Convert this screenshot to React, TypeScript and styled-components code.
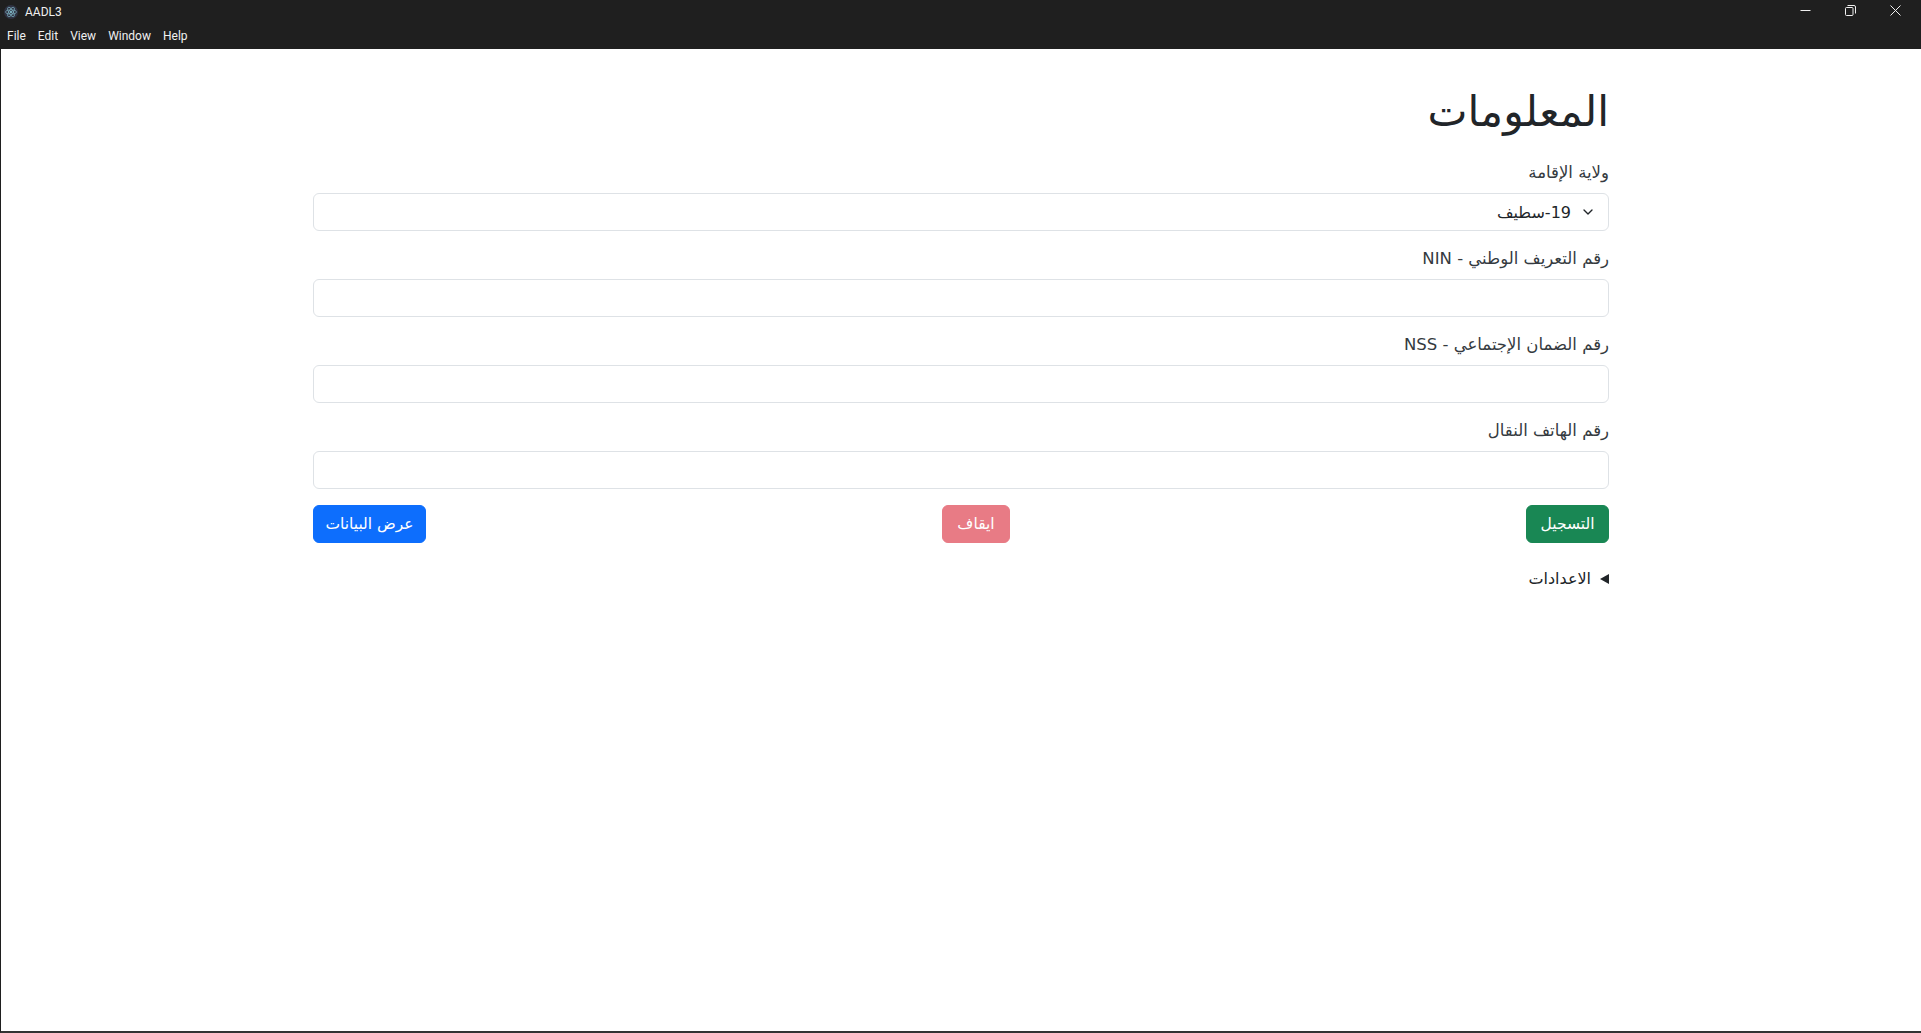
import React from 'react'
import styled, { createGlobalStyle } from 'styled-components'
import { LuChevronDown } from 'react-icons/lu'

const GlobalStyle = createGlobalStyle`
  html, body {
    margin: 0;
    padding: 0;
    background: #fff;
  }
  * {
    box-sizing: border-box;
  }
`

const menu_items = ['File', 'Edit', 'View', 'Window', 'Help']

const fields = [
  { id: 'nin', label: 'رقم التعريف الوطني - NIN' },
  { id: 'nss', label: 'رقم الضمان الإجتماعي - NSS' },
  { id: 'phone', label: 'رقم الهاتف النقال' }
]

const ElectronIcon = () => (
  <svg width="14" height="14" viewBox="0 0 14 14" fill="none">
    <circle cx="7" cy="7" r="7" fill="#2f3242" />
    <g stroke="#9feaf9" strokeWidth="0.6" opacity="0.8">
      <ellipse cx="7" cy="7" rx="5.4" ry="2.1" />
      <ellipse cx="7" cy="7" rx="5.4" ry="2.1" transform="rotate(60 7 7)" />
      <ellipse cx="7" cy="7" rx="5.4" ry="2.1" transform="rotate(120 7 7)" />
    </g>
    <circle cx="7" cy="7" r="0.9" fill="#9feaf9" />
  </svg>
)

const App: React.FC = () => {
  return (
    <>
      <GlobalStyle />
      <Frame>
        <TitleBar>
          <TitleRow>
            <ElectronIcon />
            <AppName>AADL3</AppName>
            <WindowControls>
              <WindowButton aria-label="minimize">
                <svg width="11" height="11" viewBox="0 0 11 11">
                  <path d="M0.5 5.5H10.5" stroke="#f0f0f0" />
                </svg>
              </WindowButton>
              <WindowButton aria-label="restore">
                <svg width="11" height="11" viewBox="0 0 11 11" fill="none">
                  <rect x="0.5" y="2.5" width="7.5" height="8" rx="1" stroke="#f0f0f0" />
                  <path d="M2.5 0.5H9a1.5 1.5 0 0 1 1.5 1.5V8.5" stroke="#f0f0f0" />
                </svg>
              </WindowButton>
              <WindowButton aria-label="close">
                <svg width="11" height="11" viewBox="0 0 11 11">
                  <path d="M0.5 0.5L10.5 10.5M10.5 0.5L0.5 10.5" stroke="#f0f0f0" />
                </svg>
              </WindowButton>
            </WindowControls>
          </TitleRow>
          <MenuBar>
            {menu_items.map((item) => (
              <MenuItem key={item}>{item}</MenuItem>
            ))}
          </MenuBar>
        </TitleBar>

        <Page dir="rtl">
          <Heading>المعلومات</Heading>

          <FormGroup>
            <Label>ولاية الإقامة</Label>
            <SelectBox>
              <LuChevronDown size={16} />
              <span>19-سطيف</span>
            </SelectBox>
          </FormGroup>

          {fields.map((field) => (
            <FormGroup key={field.id}>
              <Label htmlFor={field.id}>{field.label}</Label>
              <Input id={field.id} />
            </FormGroup>
          ))}

          <ButtonRow>
            <Button $color="#198754" $width={83}>التسجيل</Button>
            <Button $color="#dc3545" $width={68} $disabled>ايقاف</Button>
            <Button $color="#0d6efd" $width={113}>عرض البيانات</Button>
          </ButtonRow>

          <Settings>
            <Caret />
            <span>الاعدادات</span>
          </Settings>
        </Page>
      </Frame>
    </>
  )
}

export default App

const Frame = styled.div`
  width: 1921px;
  height: 1033px;
  display: flex;
  flex-direction: column;
  overflow: hidden;
  border-left: 1px solid #1f1f1f;
  border-bottom: 2px solid #333;
`
const TitleBar = styled.header`
  height: 49px;
  flex: none;
  margin-left: -1px;
  background: #1f1f1f;
  color: #f0f0f0;
  font-family: "Roboto", "Open Sans", sans-serif;
`
const TitleRow = styled.div`
  height: 24px;
  display: flex;
  align-items: center;
  gap: 7px;
  padding-left: 4px;
`
const AppName = styled.span`
  font-size: 12px;
`
const WindowControls = styled.div`
  margin-left: auto;
  display: flex;
  align-items: center;
  gap: 34px;
  padding-right: 20px;
  margin-top: -4px;
`
const WindowButton = styled.span`
  display: flex;
  width: 11px;
  height: 11px;
`
const MenuBar = styled.nav`
  display: flex;
  gap: 12px;
  padding-left: 7px;
  height: 24px;
  align-items: center;
`
const MenuItem = styled.span`
  font-size: 12px;
`
const Page = styled.main`
  width: 1296px;
  margin-left: 312px;
  padding-top: 39px;
  color: #212529;
  font-family: "DejaVu Sans", sans-serif;
`
const Heading = styled.h1`
  margin: 0 0 25px;
  height: 48px;
  font-size: 42.5px;
  line-height: 48px;
  font-weight: 400;
`
const FormGroup = styled.div`
  margin-bottom: 16px;
`
const Label = styled.label`
  display: block;
  height: 24px;
  margin-bottom: 8px;
  font-size: 16.5px;
  line-height: 24px;
  color: #343a40;
`
const SelectBox = styled.div`
  height: 38px;
  display: flex;
  align-items: center;
  gap: 9px;
  padding: 0 12px;
  background: #fff;
  border: 1px solid #dee2e6;
  border-radius: 6px;
  font-size: 16px;
`
const Input = styled.input`
  display: block;
  width: 100%;
  height: 38px;
  padding: 6px 12px;
  background: #fff;
  border: 1px solid #dee2e6;
  border-radius: 6px;
`
const ButtonRow = styled.div`
  display: flex;
  justify-content: space-between;
`
const Button = styled.button<{ $color: string; $width: number; $disabled?: boolean }>`
  width: ${(p) => p.$width}px;
  height: 38px;
  padding: 0;
  border: 1px solid ${(p) => p.$color};
  border-radius: 6px;
  background: ${(p) => p.$color};
  color: #fff;
  font-family: inherit;
  font-size: 15.5px;
  opacity: ${(p) => (p.$disabled ? 0.65 : 1)};
`
const Settings = styled.div`
  margin-top: 24px;
  display: flex;
  align-items: center;
  gap: 9px;
  font-size: 16px;
  line-height: 24px;
`
const Caret = styled.span`
  width: 0;
  height: 0;
  border-top: 5px solid transparent;
  border-bottom: 5px solid transparent;
  border-right: 9px solid #212529;
`
